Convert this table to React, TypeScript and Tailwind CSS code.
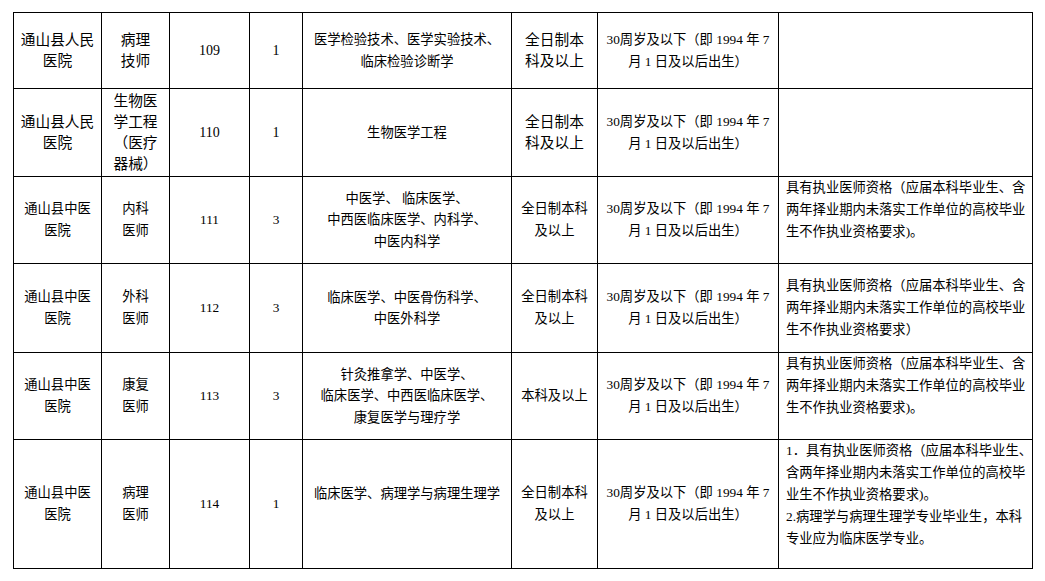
import React from "react";

type CellProps = { children?: React.ReactNode; className?: string; left?: boolean };

function Cell({ children, className = "", left = false }: CellProps) {
  return (
    <div
      className={`bg-white flex flex-col justify-center ${
        left ? "items-start text-left pl-[7px]" : "items-center text-center"
      } ${className}`}
    >
      {children}
    </div>
  );
}

function Lines({ lines }: { lines: string[] }) {
  return (
    <>
      {lines.map((l, i) => (
        <div key={i} className="whitespace-nowrap">
          {l}
        </div>
      ))}
    </>
  );
}

const big = "text-[14.7px] leading-[21px]";
const small = "text-[13.3px] leading-[22px]";
const mid = "text-[13.3px] leading-[21.5px]";
const num = "text-[13.3px] leading-[20px]";
const numBig = "text-[14px] leading-[20px]";

const age = ["30周岁及以下（即 1994 年 7", "月 1 日及以后出生）"];
const reqA = [
  "具有执业医师资格（应届本科毕业生、含",
  "两年择业期内未落实工作单位的高校毕业",
  "生不作执业资格要求)。",
];
const reqB = [
  "具有执业医师资格（应届本科毕业生、含",
  "两年择业期内未落实工作单位的高校毕业",
  "生不作执业资格要求）",
];

export default function App() {
  return (
    <div className="w-[1045px] h-[581px] bg-white pt-[12px] pl-[13px] text-black font-['Liberation_Serif','Noto_Sans_CJK_SC',serif]">
      <div className="grid w-[1020px] grid-cols-[87px_67px_79px_52px_208px_85px_180px_253px] grid-rows-[75px_87px_86px_88px_86px_128px] gap-px bg-black border border-black">
        {/* Row 1 */}
        <Cell className={big}><Lines lines={["通山县人民", "医院"]} /></Cell>
        <Cell className={big}><Lines lines={["病理", "技师"]} /></Cell>
        <Cell className={numBig}>109</Cell>
        <Cell className={numBig}>1</Cell>
        <Cell className={mid}><Lines lines={["医学检验技术、医学实验技术、", "临床检验诊断学"]} /></Cell>
        <Cell className={big}><Lines lines={["全日制本", "科及以上"]} /></Cell>
        <Cell className={small}><Lines lines={age} /></Cell>
        <Cell left className={small}></Cell>

        {/* Row 2 */}
        <Cell className={big}><Lines lines={["通山县人民", "医院"]} /></Cell>
        <Cell className={big}><Lines lines={["生物医", "学工程", "（医疗", "器械）"]} /></Cell>
        <Cell className={numBig}>110</Cell>
        <Cell className={numBig}>1</Cell>
        <Cell className={mid}><Lines lines={["生物医学工程"]} /></Cell>
        <Cell className={big}><Lines lines={["全日制本", "科及以上"]} /></Cell>
        <Cell className={small}><Lines lines={age} /></Cell>
        <Cell left className={small}></Cell>

        {/* Row 3 */}
        <Cell className={small}><Lines lines={["通山县中医", "医院"]} /></Cell>
        <Cell className={small}><Lines lines={["内科", "医师"]} /></Cell>
        <Cell className={num}>111</Cell>
        <Cell className={num}>3</Cell>
        <Cell className={mid}><Lines lines={["中医学、 临床医学、", "中西医临床医学、内科学、", "中医内科学"]} /></Cell>
        <Cell className={small}><Lines lines={["全日制本科", "及以上"]} /></Cell>
        <Cell className={small}><Lines lines={age} /></Cell>
        <Cell left className={`${small} pb-[20px]`}><Lines lines={reqA} /></Cell>

        {/* Row 4 */}
        <Cell className={small}><Lines lines={["通山县中医", "医院"]} /></Cell>
        <Cell className={small}><Lines lines={["外科", "医师"]} /></Cell>
        <Cell className={num}>112</Cell>
        <Cell className={num}>3</Cell>
        <Cell className={mid}><Lines lines={["临床医学、中医骨伤科学、", "中医外科学"]} /></Cell>
        <Cell className={small}><Lines lines={["全日制本科", "及以上"]} /></Cell>
        <Cell className={small}><Lines lines={age} /></Cell>
        <Cell left className={small}><Lines lines={reqB} /></Cell>

        {/* Row 5 */}
        <Cell className={small}><Lines lines={["通山县中医", "医院"]} /></Cell>
        <Cell className={small}><Lines lines={["康复", "医师"]} /></Cell>
        <Cell className={num}>113</Cell>
        <Cell className={num}>3</Cell>
        <Cell className={mid}><Lines lines={["针灸推拿学、中医学、", "临床医学、中西医临床医学、", "康复医学与理疗学"]} /></Cell>
        <Cell className={small}><Lines lines={["本科及以上"]} /></Cell>
        <Cell className={small}><Lines lines={age} /></Cell>
        <Cell left className={`${small} pb-[20px]`}><Lines lines={reqA} /></Cell>

        {/* Row 6 */}
        <Cell className={small}><Lines lines={["通山县中医", "医院"]} /></Cell>
        <Cell className={small}><Lines lines={["病理", "医师"]} /></Cell>
        <Cell className={num}>114</Cell>
        <Cell className={num}>1</Cell>
        <Cell className={`${mid} pb-[20px]`}><Lines lines={["临床医学、病理学与病理生理学"]} /></Cell>
        <Cell className={small}><Lines lines={["全日制本科", "及以上"]} /></Cell>
        <Cell className={small}><Lines lines={age} /></Cell>
        <Cell left className={`${small} pb-[18px]`}>
          <Lines
            lines={[
              "1．具有执业医师资格（应届本科毕业生、",
              "含两年择业期内未落实工作单位的高校毕",
              "业生不作执业资格要求)。",
              "2.病理学与病理生理学专业毕业生，本科",
              "专业应为临床医学专业。",
            ]}
          />
        </Cell>
      </div>
    </div>
  );
}
